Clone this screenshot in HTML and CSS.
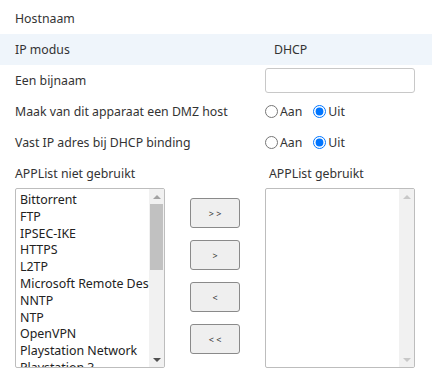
FILE: index.html
```html
<!DOCTYPE html>
<html lang="nl">
<head>
  <meta charset="UTF-8">
  <title>Apparaat instellingen</title>
  <link rel="stylesheet" href="styles.css">
</head>
<body>
  <div class="form">
    <div class="row">
      <div class="label">Hostnaam</div>
      <div class="value"></div>
    </div>
    <div class="row band">
      <div class="label">IP modus</div>
      <div class="value text">DHCP</div>
    </div>
    <div class="row">
      <div class="label">Een bijnaam</div>
      <div class="value"><input type="text" class="field"></div>
    </div>
    <div class="row">
      <div class="label">Maak van dit apparaat een DMZ host</div>
      <div class="value">
        <label class="opt"><input type="radio" name="dmz">Aan</label>
        <label class="opt"><input type="radio" name="dmz" checked>Uit</label>
      </div>
    </div>
    <div class="row">
      <div class="label">Vast IP adres bij DHCP binding</div>
      <div class="value">
        <label class="opt"><input type="radio" name="bind">Aan</label>
        <label class="opt"><input type="radio" name="bind" checked>Uit</label>
      </div>
    </div>
    <div class="row list-head">
      <div class="label">APPList niet gebruikt</div>
      <div class="value text-r">APPList gebruikt</div>
    </div>

    <div class="lists">
      <div class="listbox">
        <ul class="items">
          <li>Bittorrent</li>
          <li>FTP</li>
          <li>IPSEC-IKE</li>
          <li>HTTPS</li>
          <li>L2TP</li>
          <li>Microsoft Remote Desktop</li>
          <li>NNTP</li>
          <li>NTP</li>
          <li>OpenVPN</li>
          <li>Playstation Network</li>
          <li>Playstation 3</li>
        </ul>
        <div class="scroll">
          <span class="arrow up"></span>
          <div class="track"><div class="thumb"></div></div>
          <span class="arrow down"></span>
        </div>
      </div>

      <div class="moves">
        <button class="move">&gt; &gt;</button>
        <button class="move">&gt;</button>
        <button class="move">&lt;</button>
        <button class="move">&lt; &lt;</button>
      </div>

      <div class="listbox">
        <ul class="items"></ul>
        <div class="scroll">
          <span class="arrow up light"></span>
          <div class="track"></div>
          <span class="arrow down light"></span>
        </div>
      </div>
    </div>
  </div>
</body>
</html>
```

FILE: styles.css
```css
body {
  margin: 0;
  font-family: 'Noto Sans', 'Liberation Sans', sans-serif;
  font-size: 12.3px;
  color: #333;
  background: #fff;
}

.form {
  padding-top: 3px;
}

.row {
  display: flex;
  align-items: center;
  height: 31px;
  padding: 0 15px;
}
.band {
  background: #eff5fb;
}

.label {
  width: 250px;
  flex-shrink: 0;
}
.value {
  display: flex;
  align-items: center;
}
.value.text {
  padding-left: 9px;
}
.value.text-r {
  padding-left: 4px;
}

.field {
  box-sizing: border-box;
  width: 150px;
  height: 25px;
  margin: 0;
  border: 1px solid #c8c8c8;
  border-radius: 3px;
}

.opt {
  display: flex;
  align-items: center;
  margin-right: 11px;
}
.opt input {
  margin: 0 2px 0 0;
  width: 13px;
  height: 13px;
  accent-color: #0075ff;
}

.list-head {
  height: 30px;
}

/* the two lists with move buttons */
.lists {
  display: flex;
  padding: 0 15px;
}

.listbox {
  box-sizing: border-box;
  width: 150px;
  height: 180px;
  border: 1px solid #bdbdbd;
  border-radius: 2px;
  display: flex;
  overflow: hidden;
}

.items {
  flex: 1;
  list-style: none;
  margin: 0;
  padding: 3px 0 0 4px;
  overflow: hidden;
  white-space: nowrap;
  line-height: 16.8px;
  font-size: 12.4px;
  color: #222;
}

.scroll {
  width: 15px;
  flex-shrink: 0;
  background: #f1f1f1;
  display: flex;
  flex-direction: column;
  align-items: center;
}
.track {
  flex: 1;
  width: 100%;
  padding: 0 1px;
  box-sizing: border-box;
}
.thumb {
  height: 66px;
  background: #c1c1c1;
}
.arrow {
  width: 0;
  height: 0;
  border-left: 4px solid transparent;
  border-right: 4px solid transparent;
  margin: 6px 0 5px;
}
.arrow.up {
  border-bottom: 4px solid #a3a3a3;
}
.arrow.down {
  border-top: 4px solid #505050;
}
.arrow.light.up {
  border-bottom-color: #c8c8c8;
}
.arrow.light.down {
  border-top-color: #c8c8c8;
}

.moves {
  display: flex;
  flex-direction: column;
  gap: 12px;
  padding: 10px 25px 0;
}
.move {
  width: 50px;
  height: 30px;
  background: #efefef;
  border: 1px solid #8a8a8a;
  border-radius: 3px;
  font-family: 'Noto Sans', sans-serif;
  font-size: 9px;
  color: #333;
  padding: 0;
}
```
